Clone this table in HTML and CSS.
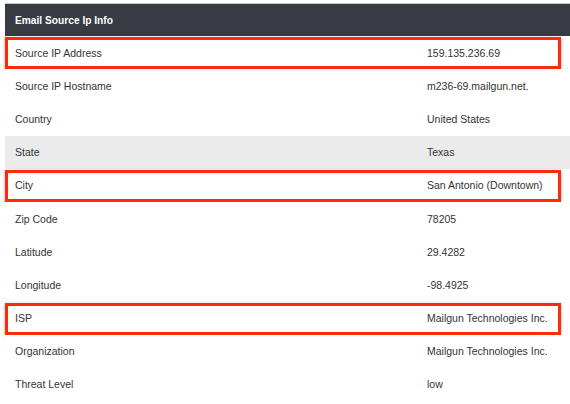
FILE: index.html
```html
<!DOCTYPE html>
<html>
<head>
<meta charset="utf-8">
<link rel="stylesheet" href="styles.css">
</head>
<body>
<div class="panel">
  <div class="header">Email Source Ip Info</div>
  <div class="row hl"><div class="k">Source IP Address</div><div class="v">159.135.236.69</div></div>
  <div class="row"><div class="k">Source IP Hostname</div><div class="v">m236-69.mailgun.net.</div></div>
  <div class="row"><div class="k">Country</div><div class="v">United States</div></div>
  <div class="row alt"><div class="k">State</div><div class="v">Texas</div></div>
  <div class="row hl"><div class="k">City</div><div class="v">San Antonio (Downtown)</div></div>
  <div class="row"><div class="k">Zip Code</div><div class="v">78205</div></div>
  <div class="row"><div class="k">Latitude</div><div class="v">29.4282</div></div>
  <div class="row"><div class="k">Longitude</div><div class="v">-98.4925</div></div>
  <div class="row hl"><div class="k">ISP</div><div class="v">Mailgun Technologies Inc.</div></div>
  <div class="row"><div class="k">Organization</div><div class="v">Mailgun Technologies Inc.</div></div>
  <div class="row"><div class="k">Threat Level</div><div class="v">low</div></div>
</div>
</body>
</html>
```
FILE: styles.css
```css
html, body {
  margin: 0;
  padding: 0;
  background: #fff;
}
body {
  font-family: "Liberation Sans", Arial, sans-serif;
  font-size: 10.5px;
  color: #333;
}
.panel {
  margin: 3px 0 0 5px;
}
.header {
  height: 33px;
  box-sizing: border-box;
  border-top: 1px solid #c8c8c8;
  background: #383b42;
  color: #fff;
  font-weight: bold;
  font-size: 10.2px;
  display: flex;
  align-items: center;
  padding-left: 10px;
}
.row {
  position: relative;
  height: 33.2px;
  display: grid;
  grid-template-columns: 412px 1fr;
  align-items: center;
  background: #fff;
}
.row.alt {
  background: #ebebeb;
}
.k, .v {
  padding: 0 10px;
  white-space: nowrap;
}
.row.hl::after {
  content: "";
  position: absolute;
  left: 0;
  top: 1px;
  right: 9px;
  bottom: 0;
  border: 3px solid #ff2a0a;
  box-shadow: 0 1px 3px rgba(0,0,0,0.35);
  pointer-events: none;
}
```
